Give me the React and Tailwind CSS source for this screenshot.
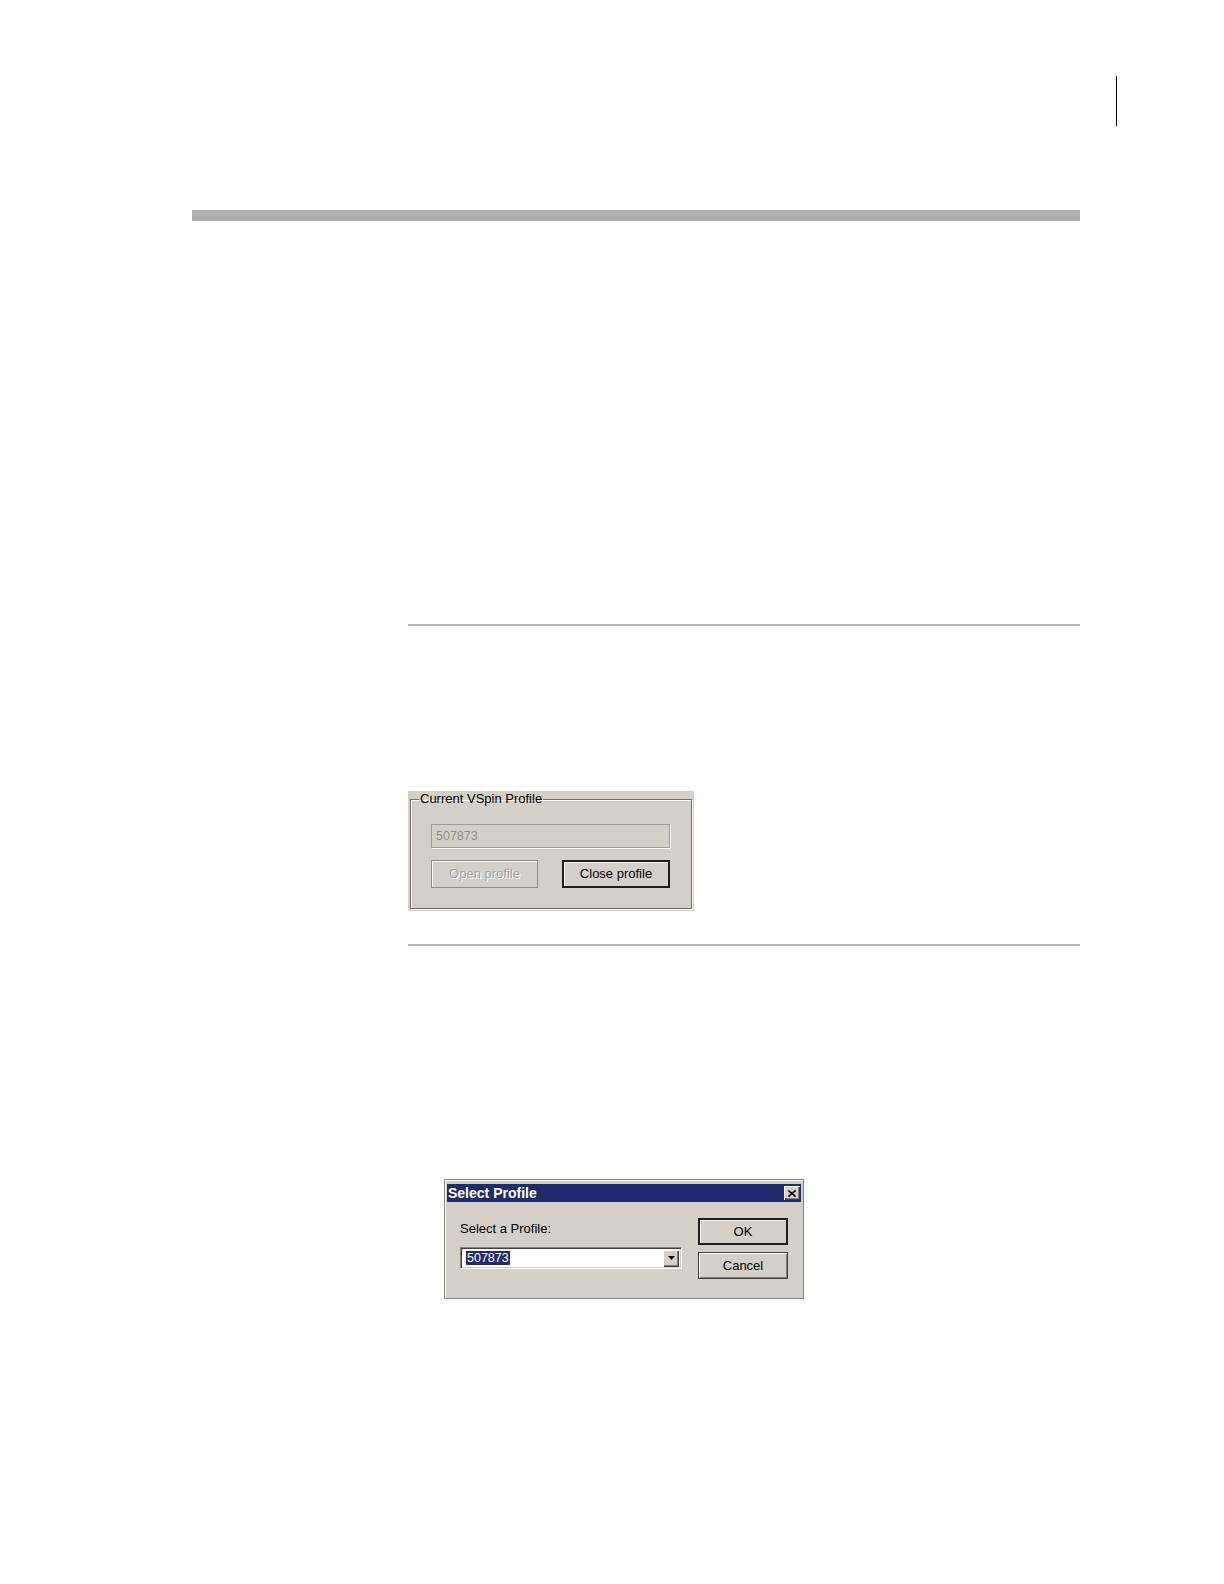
import React from 'react';

const ui = "font-['Liberation_Sans',Arial,sans-serif]";

const CloseGlyph = () => (
  <svg width="8" height="7" viewBox="0 0 8 7" aria-hidden="true">
    <path d="M0.5 0.5L7.5 6.5M7.5 0.5L0.5 6.5" stroke="#000" strokeWidth="1.6" />
  </svg>
);

const DownArrow = () => (
  <svg width="7" height="4" viewBox="0 0 7 4" aria-hidden="true">
    <path d="M0 0H7L3.5 4Z" fill="#000" />
  </svg>
);

const ProfileGroup = () => (
  <div className="ml-[408px] mt-[165px] w-[286px] h-[120px] bg-[#d4d0c8] pt-px px-[2px]">
    <fieldset className="h-[117px] border border-[#6e6e6e] shadow-[inset_1px_1px_0_#fff,1px_1px_0_#fff]">
      <legend className="ml-[8px] px-[1px] text-[13px] leading-[14px] text-black">Current VSpin Profile</legend>
      <div className="pt-[18px] pl-[20px]">
        <div className="w-[239px] h-[24px] border border-[#9c9c9c] shadow-[1px_1px_0_#fff] flex items-center pl-[4px] text-[12.5px] text-[#8c8c8c]">
          507873
        </div>
        <div className="mt-[12px] flex gap-[24px]">
          <button className="w-[107px] h-[28px] border border-[#8e8e8e] shadow-[inset_1px_1px_0_#fff] text-[13px] text-[#a3a3a3] [text-shadow:1px_1px_0_#fff]">
            Open profile
          </button>
          <button className="w-[108px] h-[28px] border-2 border-[#1e1e1e] shadow-[inset_1px_1px_0_#f4f4f4] text-[13px] text-black">
            Close profile
          </button>
        </div>
      </div>
    </fieldset>
  </div>
);

const SelectProfileDialog = () => (
  <div className="ml-[444px] mt-[233px] w-[360px] h-[120px] bg-[#d4d0c8] border border-[#858585] shadow-[inset_1px_1px_0_#fff] pt-[4px] px-[2px]">
    <div className="h-[18px] bg-[#202b6e] flex items-center justify-between pl-[1px] pr-[1px]">
      <span className="text-[14px] font-bold text-white leading-none">Select Profile</span>
      <div className="w-[16px] h-[14px] bg-[#d4d0c8] shadow-[inset_1px_1px_0_#fff,inset_-1px_-1px_0_#404040,inset_-2px_-2px_0_#808080] flex items-center justify-center">
        <CloseGlyph />
      </div>
    </div>
    <div className="flex pt-[16px] pl-[13px] pr-[13px]">
      <div className="w-[222px]">
        <div className="mt-[3px] text-[13px] leading-[15px] text-black">Select a Profile:</div>
        <div className="mt-[11px] h-[22px] bg-white border border-t-[#808080] border-l-[#808080] border-b-white border-r-white shadow-[inset_1px_1px_0_#404040,inset_-1px_-1px_0_#d4d0c8] flex items-center justify-between pl-[5px] pr-[2px]">
          <span className="bg-[#202b6e] text-white text-[12.5px] leading-[14px] px-[1px]">507873</span>
          <div className="w-[16px] h-[17px] bg-[#d4d0c8] shadow-[inset_1px_1px_0_#fff,inset_-1px_-1px_0_#404040,inset_-2px_-2px_0_#808080] flex items-center justify-center">
            <DownArrow />
          </div>
        </div>
      </div>
      <div className="ml-auto flex flex-col gap-[7px]">
        <button className="w-[90px] h-[27px] border-2 border-[#1e1e1e] shadow-[inset_1px_1px_0_#f4f4f4] text-[13px] text-black">
          OK
        </button>
        <button className="w-[90px] h-[27px] border border-[#404040] shadow-[inset_1px_1px_0_#fff,inset_-1px_-1px_0_#808080] text-[13px] text-black">
          Cancel
        </button>
      </div>
    </div>
  </div>
);

export default function App() {
  return (
    <div className={`w-[1224px] h-[1584px] bg-white overflow-hidden ${ui}`}>
      {/* page header mark */}
      <div className="pt-[76px] pl-[1116px]">
        <div className="w-px h-[50px] bg-black" />
      </div>

      {/* chapter bar */}
      <div className="mt-[84px] ml-[192px] w-[888px] h-[11px] bg-[#b0b0b0]" />

      <div className="mt-[403px] ml-[408px] w-[672px] h-[2px] bg-[#b8b8b8]" />

      <ProfileGroup />

      <div className="mt-[33px] ml-[408px] w-[672px] h-[2px] bg-[#b8b8b8]" />

      <SelectProfileDialog />
    </div>
  );
}
